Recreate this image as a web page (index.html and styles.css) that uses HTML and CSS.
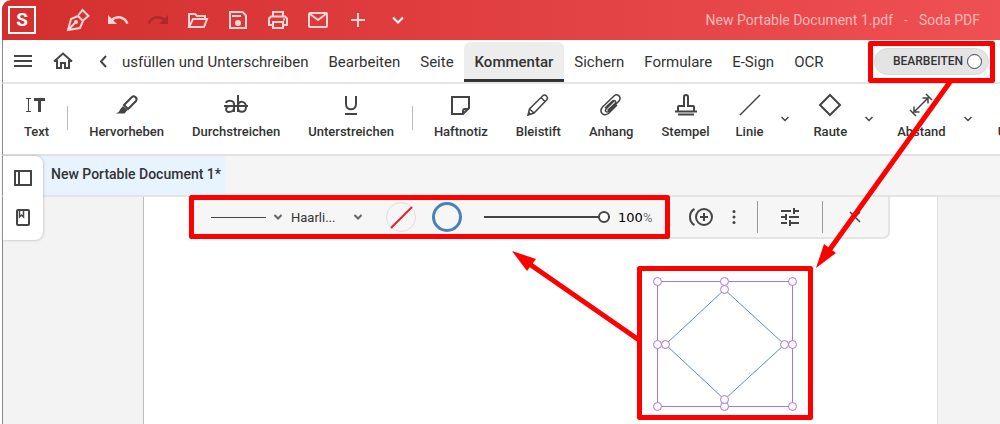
FILE: index.html
```html
<!DOCTYPE html>
<html lang="de">
<head>
    <meta charset="UTF-8">
    <title>New Portable Document 1.pdf - Soda PDF</title>
    <link rel="stylesheet" href="styles.css">
</head>
<body>
    <div class="app">
        <header class="titlebar">
            <div class="logo">S</div>
            <div class="quick">
                <button class="quick-btn" aria-label="Signieren">
                    <svg width="24" height="24" viewBox="0 0 24 24"><path d="M2 22l3-11 7-3 5 5-3 7zM2 22l7-7M12.500 7l4-5 6 6-5 4"/><circle class="solid" cx="10" cy="14" r="2"/></svg>
                </button>
                <button class="quick-btn" aria-label="Rückgängig">
                    <svg width="24" height="24" viewBox="0 0 24 24"><path class="solid" d="M12.500 8c-2.650 0-5.050 1-6.900 2.600L2 7v9h9l-3.620-3.620c1.390-1.160 3.160-1.880 5.120-1.880 3.540 0 6.550 2.310 7.600 5.500l2.370-.780C21.080 11.030 17.150 8 12.500 8z"/></svg>
                </button>
                <button class="quick-btn disabled" aria-label="Wiederholen">
                    <svg width="24" height="24" viewBox="0 0 24 24"><path class="solid" d="M18.400 10.600C16.550 9 14.150 8 11.500 8c-4.650 0-8.580 3.030-9.960 7.220L3.900 16c1.050-3.190 4.050-5.500 7.600-5.500 1.950 0 3.730.72 5.120 1.880L13 16h9V7z"/></svg>
                </button>
                <button class="quick-btn" aria-label="Öffnen">
                    <svg width="24" height="24" viewBox="0 0 24 24"><path d="M3 19V6h6l2 2h8v3M3 19l4-8h14l-3 8z"/></svg>
                </button>
                <button class="quick-btn" aria-label="Speichern">
                    <svg width="24" height="24" viewBox="0 0 24 24"><path d="M4 4h12.500L20 7.500V20H4zM6 8h9"/><circle class="solid" cx="12" cy="15" r="3"/></svg>
                </button>
                <button class="quick-btn" aria-label="Drucken">
                    <svg width="24" height="24" viewBox="0 0 24 24"><path d="M7 8V4h10v4M7 17H3v-6.500L5 8.500h14l2 2V17h-4M7 14h10v6H7z"/><path d="M17 11.500h2"/></svg>
                </button>
                <button class="quick-btn" aria-label="E-Mail">
                    <svg width="24" height="24" viewBox="0 0 24 24"><rect x="3" y="5" width="18" height="14" rx="1"/><path d="M4 6l8 6 8-6"/></svg>
                </button>
                <button class="quick-btn" aria-label="Neu">
                    <svg width="24" height="24" viewBox="0 0 24 24"><path d="M12 5v14M5 12h14"/></svg>
                </button>
                <button class="quick-btn bright" aria-label="Mehr">
                    <svg width="24" height="24" viewBox="0 0 24 24"><path d="M7 9.500l5 5 5-5"/></svg>
                </button>
            </div>
            <div class="doc-title">
                <span>New Portable Document 1.pdf</span>
                <span>-</span>
                <span>Soda PDF</span>
            </div>
        </header>

        <nav class="menu">
            <button class="menu-btn" aria-label="Menü">
                <svg width="20" height="20" viewBox="0 0 20 20"><path d="M1 5h18M1 10h18M1 15h18"/></svg>
            </button>
            <button class="menu-btn" aria-label="Start">
                <svg width="20" height="20" viewBox="0 0 20 20"><path d="M1 10.500l9-8 9 8M4 9v8h4v-5h4v5h4V9"/></svg>
            </button>
            <button class="menu-btn back" aria-label="Zurück">
                <svg width="20" height="20" viewBox="0 0 20 20"><path d="M14 5l-5 5.500 5 5.500"/></svg>
            </button>
            <div class="tabs">
                <a class="tab" href="#">usfüllen und Unterschreiben</a>
                <a class="tab" href="#">Bearbeiten</a>
                <a class="tab" href="#">Seite</a>
                <a class="tab active" href="#">Kommentar</a>
                <a class="tab" href="#">Sichern</a>
                <a class="tab" href="#">Formulare</a>
                <a class="tab" href="#">E-Sign</a>
                <a class="tab" href="#">OCR</a>
            </div>
            <label class="mode">BEARBEITEN <input type="checkbox"></label>
        </nav>

        <div class="tools">
            <button class="tool">
                <svg width="24" height="24" viewBox="0 0 24 24"><path class="thin" d="M1 5.500h5M1 18.500h5M3.500 5.500v13"/><path class="thick" d="M9 6.500h11M14.500 6.500V19"/></svg>
                <span>Text</span>
            </button>
            <i class="divider"></i>
            <button class="tool">
                <svg width="24" height="24" viewBox="0 0 24 24"><path d="M9 12l8-8c2-2 6 1 4 4l-8 8zM9 12l4 4"/><path class="solid" d="M8 13l4.500 4-3 3.500H.5c3-1 4-2 4.500-4z"/></svg>
                <span>Hervorheben</span>
            </button>
            <button class="tool">
                <svg width="24" height="24" viewBox="0 0 24 24"><path d="M2 10c1-3 8-3 8 1v8M10 13H6c-5 0-5 6-1 6 3 0 5-2 5-4M14 2v17M14 12c1-5 8-4 8 2s-7 6-8 2M0 13h24"/></svg>
                <span>Durchstreichen</span>
            </button>
            <button class="tool">
                <svg width="24" height="24" viewBox="0 0 24 24"><path d="M7 3v8c0 7 10 7 10 0V3M6 21h12"/></svg>
                <span>Unterstreichen</span>
            </button>
            <i class="divider"></i>
            <button class="tool">
                <svg width="24" height="24" viewBox="0 0 24 24"><path d="M3 4h17v11l-6 6H3zM14 21v-3q0-2 2-2h4"/></svg>
                <span>Haftnotiz</span>
            </button>
            <button class="tool">
                <svg width="24" height="24" viewBox="0 0 24 24"><path class="fine" d="M2 22l1.500-6L17 2.500q2-1 3.500.5t.5 3.500L8 20zM15 4.500l4.500 4.500M3.500 16L8 20"/><path class="solid" d="M2 22l1-3.500L5 21z"/></svg>
                <span>Bleistift</span>
            </button>
            <button class="tool">
                <svg width="24" height="24" viewBox="0 0 24 24"><path class="fine" d="M15 8l-8 8c-1.500 2 .5 4 2.500 2.500L20 8c3-4-1.500-8-5-5L3.500 14c-4 5 1 10 6 6.500l8.500-8.500M8.500 17.500L16 10.500c2-2-.5-4-2.500-2.500L6 15"/></svg>
                <span>Anhang</span>
            </button>
            <button class="tool">
                <svg width="24" height="24" viewBox="0 0 24 24"><path d="M1 18.500h22M4 21.500h16M4 18v-4q0-1 1-1h5V4q0-2 2-2t2 2v9h5q1 0 1 1v4"/></svg>
                <span>Stempel</span>
            </button>
            <button class="tool split">
                <svg width="24" height="24" viewBox="0 0 24 24"><path class="fine" d="M2 22L22 2"/></svg>
                <span>Linie</span>
            </button>
            <button class="more" aria-label="Weitere Linien"><svg width="8" height="6" viewBox="0 0 8 6"><path d="M.5 1L4 4.500 7.500 1"/></svg></button>
            <button class="tool split">
                <svg width="24" height="24" viewBox="0 0 24 24"><path d="M12 2l10 10-10 10L2 12z"/></svg>
                <span>Raute</span>
            </button>
            <button class="more" aria-label="Weitere Formen"><svg width="8" height="6" viewBox="0 0 8 6"><path d="M.5 1L4 4.500 7.500 1"/></svg></button>
            <button class="tool split">
                <svg width="24" height="24" viewBox="0 0 24 24"><path class="fine" d="M5 19L19 5M1 17l6 6M17 1l6 6M5 13.500V19h5.500M13.500 5H19v5.500"/></svg>
                <span>Abstand</span>
            </button>
            <button class="more" aria-label="Weitere Messungen"><svg width="8" height="6" viewBox="0 0 8 6"><path d="M.5 1L4 4.500 7.500 1"/></svg></button>
            <button class="tool"><svg width="24" height="24" viewBox="0 0 24 24"><path d="M4 4h16v16H4z"/></svg><span>Umfang</span></button>
        </div>

        <div class="doc-tabs">
            <a class="doc-tab" href="#">New Portable Document 1*</a>
        </div>

        <main class="workspace">
            <aside class="side">
                <button class="side-btn" aria-label="Seitenansicht">
                    <svg width="20" height="20" viewBox="0 0 20 20"><path d="M2 3h16v14H2zM6 3v14"/></svg>
                </button>
                <button class="side-btn" aria-label="Lesezeichen">
                    <svg width="20" height="20" viewBox="0 0 20 20"><rect x="4" y="2" width="12" height="15" rx="1"/><path class="fine" d="M6.500 2v7l2-2 2 2V2"/></svg>
                </button>
            </aside>
            <div class="page">
                <div class="props">
                    <button class="line-style" aria-label="Linienart">
                        <i class="line-sample"></i>
                        <svg width="8" height="6" viewBox="0 0 8 6"><path d="M.5 1L4 4.500 7.500 1"/></svg>
                    </button>
                    <div class="line-width">
                        <select aria-label="Linienstärke"><option>Haarli...</option></select>
                        <svg width="8" height="6" viewBox="0 0 8 6"><path d="M.5 1L4 4.500 7.500 1"/></svg>
                    </div>
                    <button class="swatch" aria-label="Füllfarbe">
                        <svg width="28" height="28" viewBox="0 0 28 28"><path d="M4 25L25 4"/></svg>
                    </button>
                    <button class="swatch stroke" aria-label="Linienfarbe"></button>
                    <input class="opacity" type="range" min="0" max="100" value="100" aria-label="Deckkraft">
                    <label class="percent"><input type="text" value="100" aria-label="Deckkraft in Prozent"><span>%</span></label>
                    <button class="prop-btn" aria-label="Duplizieren">
                        <svg width="24" height="20" viewBox="0 0 24 20"><circle cx="15" cy="10" r="8"/><path d="M15 6v8M11 10h8M5.500 2C-.5 5-.5 15 5.500 18"/></svg>
                    </button>
                    <button class="prop-btn dots" aria-label="Mehr">
                        <svg width="4" height="16" viewBox="0 0 4 16"><circle class="solid" cx="2" cy="2.500" r="1.500"/><circle class="solid" cx="2" cy="8" r="1.500"/><circle class="solid" cx="2" cy="13.500" r="1.500"/></svg>
                    </button>
                    <i class="bar"></i>
                    <button class="prop-btn" aria-label="Einstellungen">
                        <svg width="20" height="20" viewBox="0 0 20 20"><path d="M1 4h10M14 4h5M14 1v6M1 10h5M6 7v6M9 10h10M1 16h6M10 16h9M10 13v6"/></svg>
                    </button>
                    <i class="bar"></i>
                    <button class="prop-btn close" aria-label="Schließen">
                        <svg width="12" height="12" viewBox="0 0 12 12"><path class="fine" d="M1 1l10 10M11 1L1 11"/></svg>
                    </button>
                </div>
                <svg class="shape" width="146" height="136" viewBox="0 0 146 136">
                    <path class="diamond" d="M72.500 13.500l60 55-60 55-59-55z"/>
                    <rect x="5.500" y="5.500" width="135" height="125"/>
                    <g>
                        <circle cx="5.500" cy="5.500" r="4"/>
                        <circle cx="72.500" cy="5.500" r="4"/>
                        <circle cx="140.500" cy="5.500" r="4"/>
                        <circle cx="5.500" cy="68.500" r="4"/>
                        <circle cx="140.500" cy="68.500" r="4"/>
                        <circle cx="5.500" cy="130.500" r="4"/>
                        <circle cx="72.500" cy="130.500" r="4"/>
                        <circle cx="140.500" cy="130.500" r="4"/>
                        <circle cx="72.500" cy="13.500" r="4"/>
                        <circle cx="13.500" cy="68.500" r="4"/>
                        <circle cx="132.500" cy="68.500" r="4"/>
                        <circle cx="72.500" cy="123.500" r="4"/>
                    </g>
                </svg>
            </div>
        </main>
    </div>

    <!-- red markers drawn over the window -->
    <svg class="marks" width="1000" height="424" viewBox="0 0 1000 424">
        <rect x="870.500" y="43.500" width="122" height="37"/>
        <rect x="191.500" y="197.500" width="476" height="39"/>
        <rect x="639.500" y="268.500" width="171" height="149"/>
        <path d="M950 82L828 252M639 340L528 263"/>
        <polygon points="816,268 824,244 836,253"/>
        <polygon points="512,251 536,259 527,271"/>
    </svg>
</body>
</html>
```

FILE: styles.css
```css
* {
    box-sizing: border-box;
    margin: 0;
    padding: 0;
}
body {
    position: relative;
    overflow: hidden;
    background-color: #fff;
    color: #333;
    font-family: Roboto, "Liberation Sans", sans-serif;
}
button,
input,
select {
    border: 0;
    background: none;
    color: inherit;
    font: inherit;
}
a {
    color: inherit;
    text-decoration: none;
}
svg {
    display: block;
    flex: none;
    fill: none;
    stroke: #444;
    stroke-width: 2;
}
svg .solid {
    fill: #444;
    stroke: none;
}
svg .thin {
    stroke-width: 1;
}
svg .fine {
    stroke-width: 1.5;
}
svg .thick {
    stroke-width: 3;
}
.app {
    display: flex;
    flex-direction: column;
    min-height: 100vh;
    margin-left: 2px;
}

/* title bar */
.titlebar {
    display: flex;
    align-items: center;
    height: 40px;
    padding: 0 20px 0 6px;
    border-top-left-radius: 9px;
    background: linear-gradient(90deg, #d32f2f, #ef5053);
}
.logo {
    width: 28px;
    height: 28px;
    border: 2px solid #fff;
    color: #fff;
    font-size: 19px;
    font-weight: 700;
    line-height: 24px;
    text-align: center;
}
.quick {
    display: flex;
    margin-left: 22px;
}
.quick-btn {
    display: flex;
    justify-content: center;
    width: 40px;
}
.quick-btn svg {
    stroke: #fbd5d5;
}
.quick-btn .solid {
    fill: #fbd5d5;
}
.quick-btn.disabled .solid {
    fill: #ae2a2a;
}
.quick-btn.bright svg {
    stroke: #fff;
}
.doc-title {
    display: flex;
    gap: 11px;
    margin-left: auto;
    color: #fcb9ba;
    font-size: 14px;
    line-height: 20px;
}

/* menu row */
.menu {
    display: flex;
    align-items: center;
    height: 44px;
    padding-right: 11px;
    border-left: 1px solid #888;
    border-bottom: 2px solid #e6e6e6;
}
.menu-btn {
    display: flex;
    justify-content: center;
    width: 40px;
}
.menu-btn.back {
    width: 29px;
    padding-left: 9px;
}
.tabs {
    display: flex;
    align-self: flex-end;
}
.tab {
    height: 40px;
    padding: 0 10px;
    font-size: 15px;
    line-height: 40px;
    white-space: nowrap;
}
.tab.active {
    padding: 0 11px;
    border-bottom: 3px solid #333;
    border-radius: 6px 6px 0 0;
    background-color: #ededed;
    font-weight: 500;
}
.mode {
    display: flex;
    align-items: center;
    gap: 4px;
    height: 27px;
    margin-left: auto;
    padding: 0 6px 0 18px;
    border: 1px solid #dadada;
    border-radius: 14px;
    background-color: #e4e4e4;
    font-size: 12px;
    font-weight: 500;
}
.mode input {
    width: 15px;
    height: 15px;
    border: 1px solid #444;
    border-radius: 50%;
    background-color: #fff;
    appearance: none;
}

/* comment tools */
.tools {
    display: flex;
    align-items: center;
    height: 72px;
    padding: 0 0 5px 7px;
    overflow: hidden;
    border-left: 1px solid #888;
    border-bottom: 2px solid #e2e2e2;
}
.tool {
    display: flex;
    flex: none;
    flex-direction: column;
    align-items: center;
    gap: 7px;
    padding: 0 14px;
    font-size: 13px;
    font-weight: 500;
    line-height: 16px;
}
.tool.split {
    padding-left: 12px;
}
.divider {
    flex: none;
    width: 1px;
    height: 24px;
    margin: 3px 7px 0 4px;
    background-color: #bbb;
}
.more {
    flex: none;
    width: 24px;
    padding: 4px 0 0 4px;
}
.more svg {
    stroke-width: 1.5;
}

/* document tabs */
.doc-tabs {
    display: flex;
    height: 41px;
    padding-left: 40px;
    border-left: 1px solid #888;
    border-bottom: 2px solid #e4e4e4;
    background-color: #f5f5f5;
}
.doc-tab {
    padding: 0 4px 0 8px;
    background-color: #e7f4ff;
    font-size: 14px;
    font-weight: 500;
    line-height: 37px;
}

/* workspace */
.workspace {
    position: relative;
    display: flex;
    flex: 1;
    padding: 0 62px 0 140px;
    border-left: 1px solid #888;
    background-color: #f3f3f3;
}
.side {
    position: absolute;
    top: -41px;
    left: 0;
    display: flex;
    flex-direction: column;
    gap: 20px;
    padding: 12px 10px;
    border-radius: 0 8px 8px 0;
    background-color: #fff;
    box-shadow: 0 0 3px #aaa;
}
.page {
    position: relative;
    flex: 1;
    padding: 0 47px 0 45px;
    border-left: 1px solid #bbb;
    border-right: 1px solid #ddd;
    background-color: #fff;
}
.props {
    display: flex;
    align-items: center;
    height: 42px;
    padding: 0 27px 0 20px;
    border: 2px solid #e4e4e4;
    border-top: 0;
    border-radius: 0 0 7px 7px;
    background-color: #f6f6f6;
    font-size: 13px;
}
.line-style,
.line-width {
    display: flex;
    align-items: center;
    gap: 8px;
}
.line-style svg,
.line-width svg {
    stroke: #666;
}
.line-sample {
    width: 55px;
    height: 1px;
    background-color: #444;
}
.line-width {
    margin: 0 24px 0 9px;
}
.line-width select {
    width: 55px;
    appearance: none;
}
.swatch {
    flex: none;
    width: 30px;
    height: 30px;
    margin-right: 16px;
    border: 1px solid #ddd;
    border-radius: 50%;
}
.swatch svg {
    stroke: #ec1c2a;
}
.swatch.stroke {
    margin-right: 22px;
    border: 3px solid #4a80bb;
}
.opacity {
    width: 126px;
    height: 12px;
    background: linear-gradient(#444, #444) center / 100% 2px no-repeat;
    appearance: none;
}
.opacity::-webkit-slider-thumb {
    width: 12px;
    height: 12px;
    border: 2px solid #444;
    border-radius: 50%;
    background-color: #fff;
    appearance: none;
}
.percent {
    display: flex;
    align-items: center;
    margin: 0 36px 0 8px;
    color: #777;
    font-size: 13px;
}
.percent input {
    width: 25px;
    color: #000;
    font-family: "DejaVu Sans", sans-serif;
    font-size: 13px;
}
.prop-btn {
    flex: none;
}
.prop-btn.dots {
    margin: 0 21px 0 19px;
}
.bar {
    flex: none;
    width: 1px;
    height: 32px;
    background-color: #999;
}
.bar + .prop-btn {
    margin: 0 22px;
}
.bar + .close {
    margin: 0 0 0 auto;
}
.shape {
    position: absolute;
    top: 79px;
    left: 508px;
    stroke: #ad74dd;
    stroke-width: 1;
}
.shape circle {
    fill: #fff;
}
.shape .diamond {
    stroke: #5b8fc4;
}

.marks {
    position: absolute;
    top: 0;
    left: 0;
    pointer-events: none;
    stroke: #f00;
    stroke-width: 5;
    stroke-linejoin: round;
}
.marks polygon {
    fill: #f00;
    stroke: none;
}
```
